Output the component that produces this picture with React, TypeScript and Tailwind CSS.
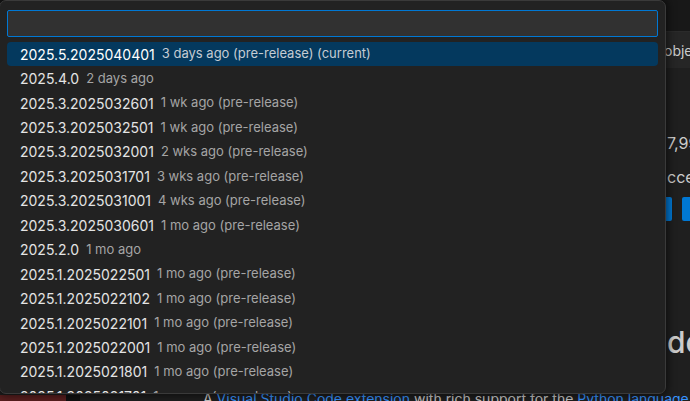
const versions: [string, string][] = [
  ["2025.5.2025040401", "3 days ago (pre-release) (current)"],
  ["2025.4.0", "2 days ago"],
  ["2025.3.2025032601", "1 wk ago (pre-release)"],
  ["2025.3.2025032501", "1 wk ago (pre-release)"],
  ["2025.3.2025032001", "2 wks ago (pre-release)"],
  ["2025.3.2025031701", "3 wks ago (pre-release)"],
  ["2025.3.2025031001", "4 wks ago (pre-release)"],
  ["2025.3.2025030601", "1 mo ago (pre-release)"],
  ["2025.2.0", "1 mo ago"],
  ["2025.1.2025022501", "1 mo ago (pre-release)"],
  ["2025.1.2025022102", "1 mo ago (pre-release)"],
  ["2025.1.2025022101", "1 mo ago (pre-release)"],
  ["2025.1.2025022001", "1 mo ago (pre-release)"],
  ["2025.1.2025021801", "1 mo ago (pre-release)"],
  ["2025.1.2025021701", "1 mo ago (pre-release)"],
];

const font = { fontFamily: "Inter, 'Noto Sans', sans-serif" };

const VersionRow = ({ label, desc, active }: { label: string; desc: string; active?: boolean }) => (
  <div
    className={`h-[24.45px] shrink-0 flex items-center gap-[7px] pl-[13px] rounded-[4px] whitespace-nowrap ${
      active ? "bg-[#04395e]" : ""
    }`}
  >
    <span className={`text-[14px] ${active ? "text-white" : "text-[#e4e4e4]"}`}>{label}</span>
    <span className={`text-[13px] ${active ? "text-[#c4ccd4]" : "text-[#a5a5a5]"}`}>{desc}</span>
  </div>
);

export default function App() {
  return (
    <div className="relative w-[690px] h-[401px] overflow-hidden bg-[#1f1f1f]" style={font}>
      {/* extension page behind the picker */}
      <div className="flex flex-col h-full">
        <div className="h-[32px] shrink-0 bg-[#181818] border-b border-[#2b2b2b]" />
        <div className="h-[36px] shrink-0 bg-[#262626] flex items-center pl-[664px] whitespace-nowrap text-[14px] text-[#cccccc]">
          objects
        </div>
        <div className="flex-1 flex min-h-0">
          <div className="w-[66px] shrink-0 flex flex-col justify-end">
            <div className="h-[6px] bg-[#5a1f1f]" />
          </div>
          <div className="w-[14px] shrink-0 flex flex-col justify-end">
            <div className="h-[6px] bg-[#111111]" />
          </div>
          <div className="flex-1 min-w-0 flex flex-col pl-[587px] whitespace-nowrap text-[#cccccc]">
            <div className="mt-[64px] text-[16px] leading-[22px]">7,99</div>
            <div className="mt-[12px] text-[16px] leading-[22px]">ccess</div>
            <div className="mt-[9px] flex gap-[10px] -ml-[4px]">
              <div className="w-[9px] shrink-0 h-[24px] rounded-[2px] bg-[#0078d4]" />
              <div className="w-[20px] shrink-0 h-[24px] rounded-[2px] bg-[#0078d4]" />
            </div>
            <div className="mt-[106px] text-[30px] leading-[30px] font-medium">de</div>
            <div className="mt-[11px] h-px bg-[#3c3c3c] -ml-[600px]" />
            <div className="mt-[22px] -ml-[464px] text-[14px] leading-[18px]">
              A <span className="text-[#3794ff]">Visual Studio Code extension</span> with rich support for the{" "}
              <span className="text-[#3794ff]">Python language</span>
            </div>
          </div>
        </div>
      </div>

      {/* version quick pick */}
      <div className="absolute -left-px top-0 w-[667px] h-[394px] bg-[#222222] border border-[#3a3a3a] rounded-[7px] shadow-[0_0_8px_2px_rgba(0,0,0,0.55)] flex flex-col overflow-hidden">
        <div className="mx-[7px] mt-[9px] h-[27px] shrink-0 bg-[#313131] border border-[#0078d4] rounded-[2px]" />
        <div className="mx-[7px] mt-[5px] flex flex-col">
          {versions.map(([label, desc], i) => (
            <VersionRow key={label} label={label} desc={desc} active={i === 0} />
          ))}
        </div>
      </div>
    </div>
  );
}
